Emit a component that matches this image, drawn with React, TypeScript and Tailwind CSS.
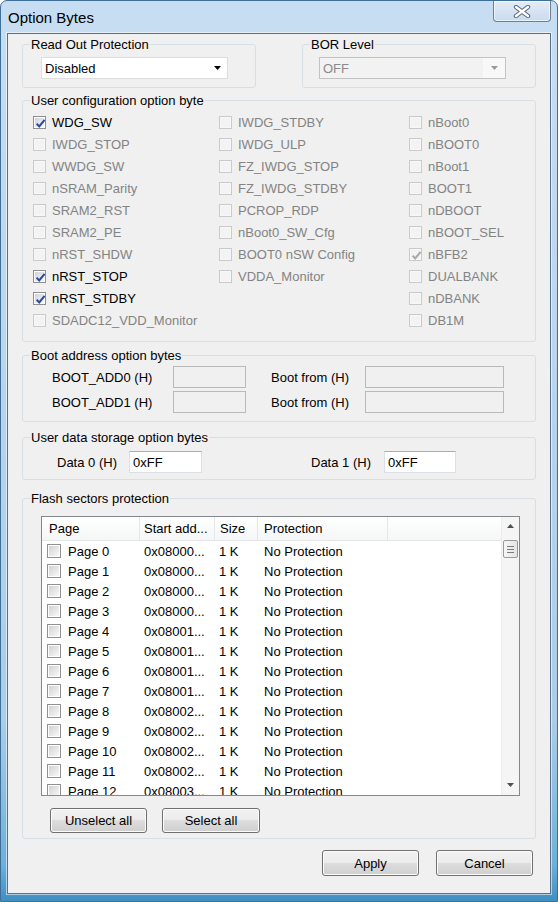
import clsx from "clsx";

type Opt = { label: string; enabled?: boolean; checked?: boolean };

// ── Option byte checkboxes ────────────────────────────────────────────────────

const col1: Opt[] = [
  { label: "WDG_SW", enabled: true, checked: true },
  { label: "IWDG_STOP" },
  { label: "WWDG_SW" },
  { label: "nSRAM_Parity" },
  { label: "SRAM2_RST" },
  { label: "SRAM2_PE" },
  { label: "nRST_SHDW" },
  { label: "nRST_STOP", enabled: true, checked: true },
  { label: "nRST_STDBY", enabled: true, checked: true },
  { label: "SDADC12_VDD_Monitor" },
];

const col2: Opt[] = [
  { label: "IWDG_STDBY" },
  { label: "IWDG_ULP" },
  { label: "FZ_IWDG_STOP" },
  { label: "FZ_IWDG_STDBY" },
  { label: "PCROP_RDP" },
  { label: "nBoot0_SW_Cfg" },
  { label: "BOOT0 nSW Config" },
  { label: "VDDA_Monitor" },
];

const col3: Opt[] = [
  { label: "nBoot0" },
  { label: "nBOOT0" },
  { label: "nBoot1" },
  { label: "BOOT1" },
  { label: "nDBOOT" },
  { label: "nBOOT_SEL" },
  { label: "nBFB2", checked: true },
  { label: "DUALBANK" },
  { label: "nDBANK" },
  { label: "DB1M" },
];

const pages = Array.from({ length: 13 }, (_, i) => ({
  name: `Page ${i}`,
  addr: `0x0800${Math.floor(i / 4)}...`,
}));

// ── Small pieces ──────────────────────────────────────────────────────────────

function CheckBox({ checked, enabled }: { checked?: boolean; enabled?: boolean }) {
  return (
    <span
      className={clsx(
        "relative flex h-[13px] w-[13px] shrink-0 items-center justify-center border",
        enabled ? "border-[#8e8f8f] bg-white" : "border-[#cacaca] bg-[#f7f7f7]"
      )}
    >
      <span
        className={clsx(
          "h-[9px] w-[9px]",
          enabled ? "bg-[linear-gradient(135deg,#cfd3d9,#f8f8f8)]" : "bg-[#f3f3f3]"
        )}
      />
      {checked && (
        <svg className="absolute left-[1px] top-[1px]" width="11" height="11" viewBox="0 0 11 11">
          <path
            d="M1.6 5.6 L4.2 8.4 L9.6 1.8"
            fill="none"
            stroke={enabled ? "#2b4a9c" : "#a8a8a8"}
            strokeWidth="2"
          />
        </svg>
      )}
    </span>
  );
}

function OptionRow({ opt }: { opt: Opt }) {
  return (
    <div className="flex h-[22px] items-center gap-[6px]">
      <CheckBox checked={opt.checked} enabled={opt.enabled} />
      <span className={opt.enabled ? "text-black" : "text-[#838383]"}>{opt.label}</span>
    </div>
  );
}

function ListCheck() {
  return (
    <span className="flex h-[14px] w-[14px] shrink-0 items-center justify-center border border-[#8e8f8f] bg-white">
      <span className="h-[10px] w-[10px] bg-[linear-gradient(135deg,#d2d2d2,#f9f9f9)]" />
    </span>
  );
}

function WinButton({ children, className }: { children: React.ReactNode; className?: string }) {
  return (
    <button
      className={clsx(
        "rounded-[3px] border border-[#707070] bg-[linear-gradient(to_bottom,#f2f2f2_0%,#ebebeb_49%,#dddddd_50%,#cfcfcf_100%)] text-[13px] text-black shadow-[inset_0_0_0_1px_#fcfcfc]",
        className
      )}
    >
      {children}
    </button>
  );
}

function Group({
  title,
  className,
  children,
}: {
  title: string;
  className?: string;
  children: React.ReactNode;
}) {
  return (
    <fieldset className={clsx("rounded-[3px] border border-[#d5dfe5] p-0", className)}>
      <legend className="ml-[7px] px-[1px] text-[13px] leading-[15px] text-black">{title}</legend>
      {children}
    </fieldset>
  );
}

function Arrow({ color, dir = "down" }: { color: string; dir?: "up" | "down" }) {
  return (
    <svg width="7" height="4" viewBox="0 0 7 4">
      <polygon points={dir === "down" ? "0,0 7,0 3.5,4" : "0,4 7,4 3.5,0"} fill={color} />
    </svg>
  );
}

// ── Dialog ────────────────────────────────────────────────────────────────────

export default function App() {
  return (
    <div className="h-[902px] w-[558px] overflow-hidden rounded-t-[7px] border border-[#3d6f98] bg-[linear-gradient(to_bottom,#c7def2_0%,#bcd6ed_35%,#aacde9_80%,#6db0d8_96%,#3f8fc2_100%)] font-['Liberation_Sans',Arial,sans-serif] text-[13px] leading-[15px]">
      {/* Title bar */}
      <div className="flex h-[32px] items-start justify-between">
        <div className="pl-[7px] pt-[8px] text-[15px] leading-[17px] text-black">Option Bytes</div>
        <div className="mr-[6px] flex h-[21px] w-[58px] items-center justify-center rounded-b-[4px] border border-t-0 border-[#6f7f92] bg-[linear-gradient(to_bottom,#e3edf7,#c9dbee)] shadow-[inset_0_0_0_1px_rgba(255,255,255,0.6)]">
          <svg width="18" height="13" viewBox="0 0 18 13">
            <path d="M3 2 L15 11 M15 2 L3 11" stroke="#56687c" strokeWidth="4.4" strokeLinecap="round" />
            <path d="M3 2 L15 11 M15 2 L3 11" stroke="#ffffff" strokeWidth="2.4" strokeLinecap="round" />
          </svg>
        </div>
      </div>

      {/* Client area */}
      <div className="mx-[6px] flex h-[861px] flex-col border border-[#55718d] bg-[#f0f0f0] px-[14px] pt-[3px] shadow-[0_0_0_1px_rgba(255,255,255,0.55)]">
        {/* Read out / BOR */}
        <div className="flex justify-between">
          <Group title="Read Out Protection" className="w-[234px]">
            <div className="pb-[8px] pl-[18px] pt-[5px]">
              <div className="flex h-[22px] w-[187px] items-center border border-[#dedede] bg-white pl-[3px] text-black">
                <span className="flex-1">Disabled</span>
                <span className="mr-[6px] flex">
                  <Arrow color="#000000" />
                </span>
              </div>
            </div>
          </Group>
          <Group title="BOR Level" className="w-[234px]">
            <div className="pb-[8px] pl-[16px] pt-[5px]">
              <div className="flex h-[22px] w-[187px] border border-[#c3c3c3] bg-[#f2f2f2] text-[#8a8a8a]">
                <span className="flex flex-1 items-center pl-[3px]">OFF</span>
                <span className="flex w-[22px] items-center justify-center bg-[#f8f8f8]">
                  <Arrow color="#9a9a9a" />
                </span>
              </div>
            </div>
          </Group>
        </div>

        {/* User configuration */}
        <Group title="User configuration option byte" className="mt-[5px]">
          <div className="grid grid-cols-[186px_190px_1fr] pb-[10px] pl-[10px] pt-[3px]">
            {[col1, col2, col3].map((col, ci) => (
              <div key={ci} className="flex flex-col">
                {col.map((o) => (
                  <OptionRow key={o.label} opt={o} />
                ))}
              </div>
            ))}
          </div>
        </Group>

        {/* Boot address */}
        <Group title="Boot address option bytes" className="mt-[6px]">
          <div className="grid grid-cols-[121px_73px_25px_94px_139px] gap-y-[3px] pb-[8px] pl-[29px] pt-[3px] text-black">
            {["BOOT_ADD0 (H)", "BOOT_ADD1 (H)"].map((l) => (
              <div key={l} className="contents">
                <span className="flex h-[22px] items-center">{l}</span>
                <span className="h-[22px] border border-[#b9b9b9] bg-[#f0f0f0]" />
                <span />
                <span className="flex h-[22px] items-center">Boot from (H)</span>
                <span className="h-[22px] border border-[#b9b9b9] bg-[#f0f0f0]" />
              </div>
            ))}
          </div>
        </Group>

        {/* User data */}
        <Group title="User data storage option bytes" className="mt-[8px]">
          <div className="flex items-center pb-[6px] pl-[34px] pt-[6px] text-black">
            <span className="w-[72px]">Data 0 (H)</span>
            <span className="flex h-[22px] w-[73px] items-center border border-[#dbdfe6] border-t-[#abadb3] bg-white pl-[3px]">
              0xFF
            </span>
            <span className="ml-[109px] w-[73px]">Data 1 (H)</span>
            <span className="flex h-[22px] w-[72px] items-center border border-[#dbdfe6] border-t-[#abadb3] bg-white pl-[3px]">
              0xFF
            </span>
          </div>
        </Group>

        {/* Flash sectors */}
        <Group title="Flash sectors protection" className="mt-[11px]">
          <div className="pb-[5px] pl-[18px] pt-[10px]">
            <div className="flex h-[280px] w-[479px] border border-[#828790] bg-white text-black">
              <div className="flex min-w-0 flex-1 flex-col">
                <div className="flex h-[24px] shrink-0 border-b border-[#e5e5e5] bg-[linear-gradient(to_bottom,#ffffff,#f5f6f7)]">
                  <div className="flex w-[98px] items-center border-r border-[#e3e6ea] pl-[7px]">Page</div>
                  <div className="flex w-[75px] items-center border-r border-[#e3e6ea] pl-[4px]">Start add...</div>
                  <div className="flex w-[43px] items-center border-r border-[#e3e6ea] pl-[5px]">Size</div>
                  <div className="flex w-[130px] items-center border-r border-[#e3e6ea] pl-[6px]">Protection</div>
                  <div className="flex-1" />
                </div>
                <div className="flex-1 overflow-hidden">
                  {pages.map((p) => (
                    <div key={p.name} className="flex h-[20px] items-center">
                      <div className="flex w-[98px] items-center pl-[5px]">
                        <ListCheck />
                        <span className="ml-[7px]">{p.name}</span>
                      </div>
                      <div className="w-[75px] pl-[4px]">{p.addr}</div>
                      <div className="w-[43px] pl-[4px]">1 K</div>
                      <div className="pl-[6px]">No Protection</div>
                    </div>
                  ))}
                </div>
              </div>

              {/* Scrollbar */}
              <div className="flex w-[18px] flex-col border-l border-[#ededed] bg-[#f5f5f5]">
                <div className="flex h-[18px] items-center justify-center">
                  <Arrow color="#505050" dir="up" />
                </div>
                <div className="mx-[1px] mt-[5px] flex h-[18px] flex-col items-center justify-center gap-[2px] rounded-[2px] border border-[#9a9a9a] bg-[linear-gradient(to_right,#f6f6f6,#e4e4e4)]">
                  <span className="h-px w-[7px] bg-[#7a7a7a]" />
                  <span className="h-px w-[7px] bg-[#7a7a7a]" />
                  <span className="h-px w-[7px] bg-[#7a7a7a]" />
                </div>
                <div className="flex-1" />
                <div className="flex h-[20px] items-center justify-center">
                  <Arrow color="#505050" />
                </div>
              </div>
            </div>

            <div className="mt-[12px] flex gap-[15px] pl-[9px]">
              <WinButton className="h-[25px] w-[97px]">Unselect all</WinButton>
              <WinButton className="h-[25px] w-[98px]">Select all</WinButton>
            </div>
          </div>
        </Group>

        {/* Footer */}
        <div className="mt-[11px] flex justify-end gap-[17px] pr-[3px]">
          <WinButton className="h-[26px] w-[97px]">Apply</WinButton>
          <WinButton className="h-[26px] w-[97px]">Cancel</WinButton>
        </div>
      </div>
    </div>
  );
}
